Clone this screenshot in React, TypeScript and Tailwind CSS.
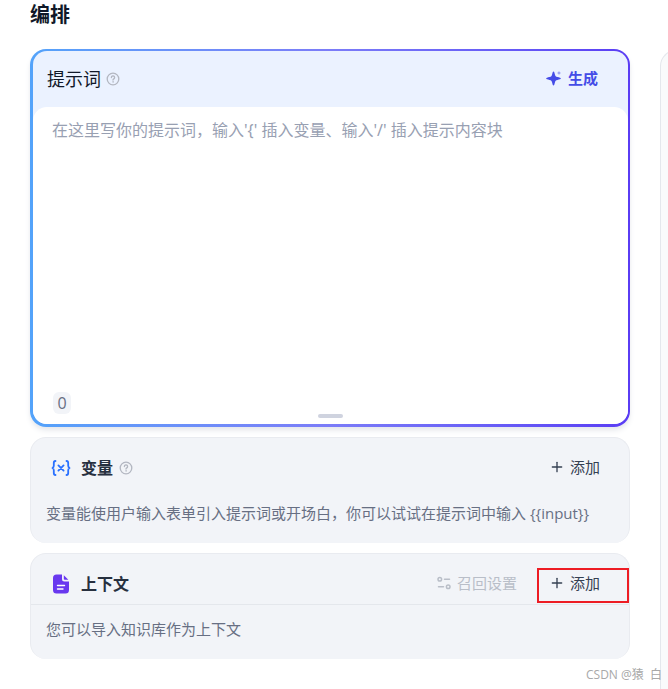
import type { ReactNode } from 'react';
import { Plus } from 'lucide-react';

function HelpIcon() {
  return (
    <svg viewBox="0 0 14 14" className="size-3.5 shrink-0 text-[#b3b7c1]" fill="none" stroke="currentColor" strokeWidth="1.3" strokeLinecap="round" aria-hidden="true">
      <circle cx="7" cy="7" r="5.8" />
      <path d="M5.400 5.500a1.600 1.600 0 1 1 2.400 1.400c-.5.3-.8.6-.8 1.100" />
      <circle cx="7" cy="9.900" r=".3" fill="currentColor" strokeWidth=".7" />
    </svg>
  );
}

function SparkleIcon() {
  return (
    <svg viewBox="0 0 16 16" className="size-4 shrink-0" fill="currentColor" aria-hidden="true">
      <path d="M7.500 1.500c.7 0 .9 1 1.400 3 .4 1.800.8 2.200 2.600 2.600 2 .5 3.300.7 3.300 1.400s-1.300.9-3.300 1.400c-1.800.4-2.200.8-2.600 2.600-.5 2-.7 3-1.400 3s-.9-1-1.400-3c-.4-1.800-.8-2.200-2.600-2.600-2-.5-3.300-.7-3.300-1.400s1.300-.9 3.300-1.400c1.800-.4 2.200-.8 2.600-2.600.5-2 .7-3 1.400-3z" />
      <path opacity=".5" d="M13 1l.7 1.300L15 3l-1.300.7L13 5l-.7-1.300L11 3l1.300-.7z" />
    </svg>
  );
}

function VariableIcon() {
  return (
    <svg viewBox="0 0 20 20" className="size-5 shrink-0 text-[#2970ff]" fill="none" stroke="currentColor" strokeWidth="1.8" strokeLinecap="round" strokeLinejoin="round" aria-hidden="true">
      <path d="M4.500 3C3 3 2.800 3.800 2.800 5v2.800c0 1.200-.4 1.700-1.300 2.200.9.5 1.300 1 1.300 2.200V15c0 1.200.2 2 1.700 2" />
      <path d="M15.500 3c1.500 0 1.700.8 1.700 2v2.800c0 1.200.4 1.700 1.300 2.200-.9.5-1.300 1-1.300 2.200V15c0 1.200-.2 2-1.700 2" />
      <path d="M7.400 7.400l5.200 5.200M12.600 7.400l-5.200 5.200" />
    </svg>
  );
}

function FileIcon() {
  return (
    <svg viewBox="0 0 20 20" className="size-5 shrink-0" aria-hidden="true">
      <path fill="#6938ef" d="M5.500.5H11V5c0 1.700.8 2.500 2.500 2.500H18V16a3.500 3.500 0 0 1-3.500 3.500h-9A3.500 3.500 0 0 1 2 16V4A3.500 3.500 0 0 1 5.500.5z" />
      <path fill="#6938ef" d="M12.800 1.200l4.500 4.500h-3.500a1 1 0 0 1-1-1z" />
      <path stroke="#fff" strokeWidth="1.400" strokeLinecap="round" d="M6.500 11.500h7M6.500 15h5.500" />
    </svg>
  );
}

function RecallIcon() {
  return (
    <svg viewBox="0 0 14 14" className="size-3.5 shrink-0" fill="none" stroke="currentColor" strokeWidth="1.500" strokeLinecap="round" aria-hidden="true">
      <circle cx="2.800" cy="3.200" r="1.800" />
      <path d="M7.500 3.200h5M1.500 10.800h5" />
      <circle cx="11.200" cy="10.800" r="1.800" />
    </svg>
  );
}

function AddButton({ highlighted = false }: { highlighted?: boolean }) {
  return (
    <button
      type="button"
      className={`flex h-[35px] w-[92px] items-center gap-[5px] border-2 pb-1.5 pl-2.5 text-[15px] leading-5 text-[#354052] ${highlighted ? 'border-[#ed1c24]' : 'border-transparent'}`}
    >
      <Plus className="size-4 shrink-0" strokeWidth={2} aria-hidden="true" />
      添加
    </button>
  );
}

function Panel({ icon, title, actions, help = false, divided = false, children }: {
  icon: ReactNode;
  title: string;
  actions: ReactNode;
  help?: boolean;
  divided?: boolean;
  children: ReactNode;
}) {
  return (
    <section className="rounded-2xl border border-b-0 border-[#e9ebf0] bg-[#f2f4f8] pb-[18px]">
      <div className={`flex h-[51px] items-end justify-between border-b pb-px pl-5 ${divided ? 'border-[#e4e7ec]' : 'border-transparent'}`}>
        <div className="flex h-[39px] items-center gap-2.5">
          {icon}
          <h2 className="text-base leading-6 font-semibold text-[#27303f]">{title}</h2>
          {help && <span className="-ml-1"><HelpIcon /></span>}
        </div>
        <div className="flex items-center">{actions}</div>
      </div>
      <p className="px-[15px] pt-3 text-[15px] leading-6 text-[#676f83]">{children}</p>
    </section>
  );
}

function PromptEditor() {
  return (
    <section className="rounded-2xl bg-gradient-to-r from-[#53a3fa] via-[#7b7cf8] to-[#5a3cf4] pt-0.5 pr-0.5 pb-[3px] pl-[3px] shadow-md shadow-gray-200">
      <div className="rounded-[14px] bg-[#ebf2ff]">
        <div className="flex h-14 items-center justify-between pr-[30px] pl-3.5">
          <div className="flex items-center gap-[5px]">
            <label htmlFor="prompt" className="text-lg leading-6 text-[#101828]">提示词</label>
            <HelpIcon />
          </div>
          <button type="button" className="flex items-center gap-1.5 pb-0.5 text-[15px] leading-5 font-semibold text-[#444ce7]">
            <SparkleIcon />
            生成
          </button>
        </div>
        <div className="rounded-[14px] bg-white">
          <textarea
            id="prompt"
            className="block h-[285px] w-full resize-none bg-transparent px-[19px] pt-[11px] font-['Noto_Sans','Noto_Sans_CJK_SC',sans-serif] text-base leading-6 text-gray-800 outline-none placeholder:text-[#98a0b2]"
            placeholder="在这里写你的提示词，输入'{' 插入变量、输入'/' 插入提示内容块"
          />
          <div className="px-5">
            <span className="flex h-[22px] w-[18px] items-center justify-center rounded-md bg-[#f2f4f8] text-base leading-5 text-[#676f83]">0</span>
          </div>
          <div className="flex h-2.5 items-start justify-center">
            <span className="h-1 w-[25px] rounded-full bg-[#cfd3df]" />
          </div>
        </div>
      </div>
    </section>
  );
}

export default function App() {
  return (
    <div className="relative flex min-h-screen gap-[30px] overflow-hidden bg-white pl-[30px] font-['Open_Sans','Noto_Sans_CJK_SC',sans-serif]">
      <main className="min-w-0 flex-1">
        <h1 className="pt-[3px] text-xl leading-6 font-bold text-[#101828]">编排</h1>
        <div className="flex flex-col gap-2.5 pt-[22px]">
          <PromptEditor />
          <Panel icon={<VariableIcon />} title="变量" help actions={<AddButton />}>
            {'变量能使用户输入表单引入提示词或开场白，你可以试试在提示词中输入 {{input}}'}
          </Panel>
          <Panel
            icon={<FileIcon />}
            title="上下文"
            divided
            actions={
              <>
                <button type="button" disabled className="mr-5 flex items-center gap-1.5 pb-1.5 text-[15px] leading-5 text-[#b9bec8]">
                  <RecallIcon />
                  召回设置
                </button>
                <AddButton highlighted />
              </>
            }
          >
            您可以导入知识库作为上下文
          </Panel>
        </div>
      </main>
      <aside className="-mr-6 mt-[50px] w-8 shrink-0 rounded-tl-2xl border-t border-l border-[#e4e7ec] bg-[#f9fafb]" />
      <span className="absolute right-1.5 bottom-1 text-xs leading-5 whitespace-pre text-[#a8a8a8]">CSDN @猿  白</span>
    </div>
  );
}
